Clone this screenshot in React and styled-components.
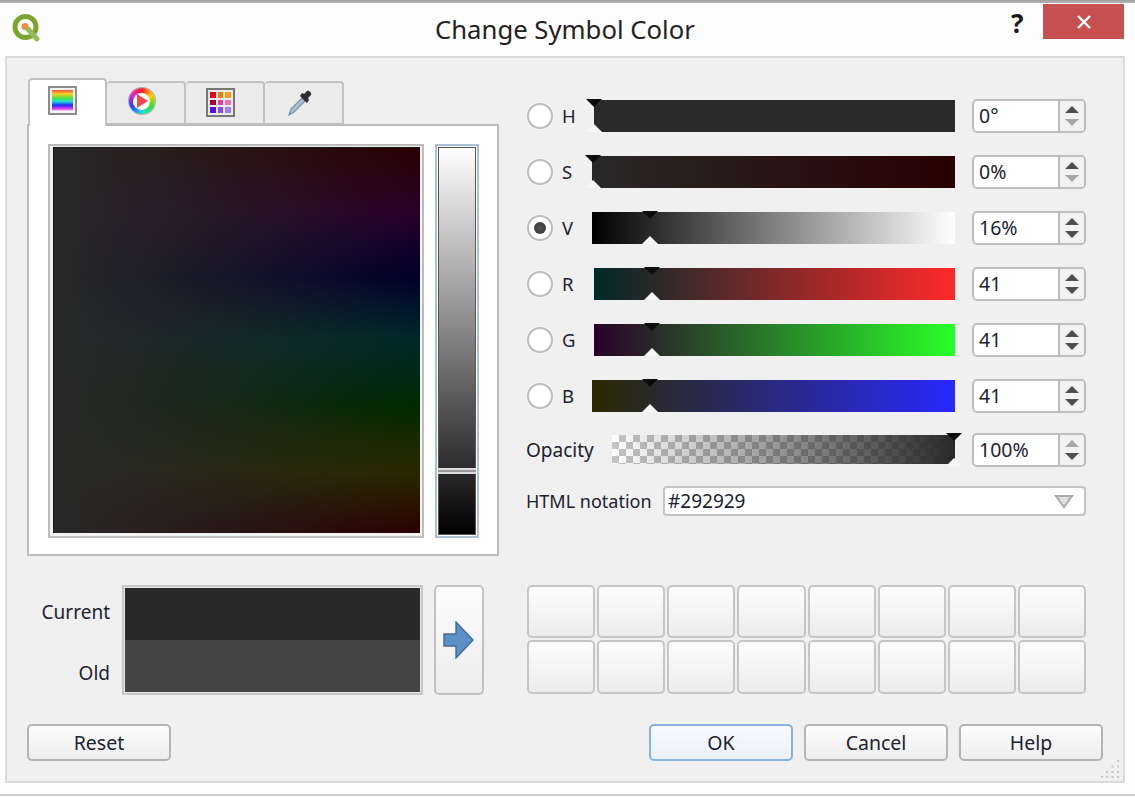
import React from "react";
import styled, { createGlobalStyle } from "styled-components";

const Global = createGlobalStyle`
  html, body { margin: 0; padding: 0; background: #fdfdfd; }
  body { font-family: "Noto Sans", "Open Sans", sans-serif; color: #1c2230; overflow: hidden; }
  * { box-sizing: border-box; }
`;

const Window = styled.div`
  width: 1135px;
  height: 797px;
  display: flex;
  flex-direction: column;
  position: relative;
  background: #fdfdfd;
`;
const TopEdge = styled.div`
  height: 3px;
  background: linear-gradient(#9c9c9c, #b8b8b8);
`;
const TitleBar = styled.div`
  height: 53px;
  display: flex;
  align-items: flex-start;
  position: relative;
  padding-left: 11px;
`;
const Logo = styled.svg`
  width: 30px;
  height: 30px;
  margin-top: 11px;
`;
const Title = styled.div`
  position: absolute;
  left: 435px;
  top: 9px;
  font-size: 25.7px;
  line-height: 36px;
  color: #222;
  white-space: nowrap;
`;
const HelpMark = styled.div`
  position: absolute;
  left: 1011px;
  top: 4px;
  font-size: 26px;
  line-height: 32px;
  font-weight: 700;
  color: #1a1a1a;
`;
const CloseBox = styled.div`
  position: absolute;
  left: 1043px;
  top: 1px;
  width: 81px;
  height: 35px;
  background: #c75050;
  display: flex;
  align-items: center;
  justify-content: center;
`;
const Panel = styled.div`
  width: 1120px;
  height: 727px;
  margin-left: 5px;
  border: 2px solid #dadada;
  background: #f0f0f0;
  padding: 20px 0 0 20px;
  display: flex;
  flex-direction: column;
  position: relative;
`;
const BottomEdge = styled.div`
  margin-top: 11px;
  height: 2px;
  background: #d0d0d0;
`;
const TopRow = styled.div`
  display: flex;
  height: 478px;
  gap: 28px;
`;
const LeftCol = styled.div`
  width: 472px;
  display: flex;
  flex-direction: column;
`;
const TabBar = styled.div`
  height: 48px;
  display: flex;
  align-items: flex-end;
  padding-left: 1px;
  margin-bottom: -2px;
  position: relative;
  z-index: 1;
`;
const Tab = styled.div`
  width: 79px;
  height: ${(p) => (p.$active ? "48px" : "43px")};
  margin-bottom: ${(p) => (p.$active ? "0" : "2px")};
  background: ${(p) => (p.$active ? "#fff" : "#ebebeb")};
  border: 2px solid #c2c2c2;
  border-bottom: ${(p) => (p.$active ? "none" : "1px solid #c2c2c2")};
  border-left-width: ${(p) => (p.$active ? "2px" : "0")};
  border-radius: 4px 4px 0 0;
  display: flex;
  justify-content: center;
  padding: ${(p) => (p.$active ? "6px 10px 0 0" : "2px 8px 0 0")};
`;
const TabPane = styled.div`
  flex: 1;
  background: #fff;
  border: 2px solid #bdbdbd;
  padding: 18px 18px 16px 19px;
  display: flex;
  gap: 11px;
`;
const ColorBox = styled.div`
  width: 376px;
  border: 2px solid #bcbcbc;
  padding: 1px 2px 3px 3px;
  background: #f2f2f2;
`;
const ColorField = styled.div`
  height: 100%;
  border-top: 1px solid #161616;
  border-left: 1px solid #161616;
  background:
    linear-gradient(to right, #292929, rgba(41, 41, 41, 0)),
    linear-gradient(to bottom, #290000 0%, #290029 16.6%, #000029 33.3%, #002929 50%, #002900 66.6%, #292900 83.3%, #290000 100%);
`;
const ValueBox = styled.div`
  width: 44px;
  border: 2px solid #a9c1d9;
  padding: 1px;
  background: #fff;
  position: relative;
`;
const ValueField = styled.div`
  height: 100%;
  background: linear-gradient(to bottom, #ffffff, #000000);
  box-shadow: inset 0 0 0 1px #555;
`;
const ValueMark = styled.div`
  position: absolute;
  left: 1px;
  right: 1px;
  bottom: 62px;
  height: 6px;
  background: #9a9a9a;
  border-top: 2px solid #dcdcdc;
  border-bottom: 2px solid #dcdcdc;
`;
const RightCol = styled.div`
  width: 559px;
  padding-top: 21px;
  display: flex;
  flex-direction: column;
`;
const SliderRows = styled.div`
  display: flex;
  flex-direction: column;
  gap: 22px;
`;
const Row = styled.div`
  display: flex;
  align-items: center;
  height: 34px;
`;
const Radio = styled.div`
  width: 26px;
  height: 26px;
  border-radius: 50%;
  border: 2px solid #bdbdbd;
  background: #fff;
  display: flex;
  align-items: center;
  justify-content: center;
  flex: none;
  &::after {
    content: "";
    display: ${(p) => (p.$on ? "block" : "none")};
    width: 12px;
    height: 12px;
    border-radius: 50%;
    background: radial-gradient(#555, #333);
  }
`;
const ChannelLabel = styled.div`
  width: 39px;
  padding: 0 0 2px 9px;
  font-size: 18.5px;
  flex: none;
`;
const Track = styled.div`
  width: 363px;
  height: 34px;
  position: relative;
  flex: none;
`;
const Bar = styled.div`
  position: absolute;
  left: ${(p) => p.$start}px;
  right: 0;
  top: 1px;
  bottom: 1px;
  background: ${(p) => p.$fill};
`;
const Grab = styled.div`
  position: absolute;
  top: 0;
  bottom: 1px;
  width: 18px;
  margin-left: -9px;
  &::before, &::after {
    content: "";
    position: absolute;
    width: 0;
    height: 0;
    border-left: 8px solid transparent;
    border-right: 8px solid transparent;
    left: 1px;
  }
  &::before { top: 0; border-top: 8px solid #0c0c0c; }
  &::after { bottom: 0; border-bottom: 8px solid #f6f6f6; }
`;
const Spin = styled.div`
  width: 114px;
  height: 34px;
  margin-left: 17px;
  border: 2px solid #bdbdbd;
  border-radius: 5px;
  background: #fff;
  display: flex;
  font-size: 19.5px;
  flex: none;
`;
const SpinValue = styled.div`
  flex: 1;
  padding-left: 5px;
  line-height: 30px;
`;
const SpinButtons = styled.div`
  width: 26px;
  background: #f2f2f2;
  border-left: 2px solid #bdbdbd;
  border-radius: 0 3px 3px 0;
  display: flex;
  flex-direction: column;
  align-items: center;
  justify-content: center;
  gap: 6px;
`;
const Arrow = styled.div`
  width: 0;
  height: 0;
  border-left: 7px solid transparent;
  border-right: 7px solid transparent;
  ${(p) => (p.$down ? "border-top" : "border-bottom")}: 7px solid ${(p) => (p.$off ? "#a8a8a8" : "#505050")};
`;
const OpacityRow = styled(Row)`
  margin-top: 20px;
`;
const OpacityLabel = styled.div`
  width: 85px;
  margin-left: -1px;
  margin-right: 1px;
  font-size: 19px;
  flex: none;
`;
const OpacityTrack = styled(Track)`
  width: 343px;
`;
const Checker = styled.div`
  position: absolute;
  left: 0;
  right: 0;
  top: 2px;
  bottom: 3px;
  background:
    linear-gradient(to right, rgba(41, 41, 41, 0), #292929),
    repeating-conic-gradient(#c4c4c4 0 25%, #ffffff 0 50%) 0 0 / 14px 14px;
`;
const HtmlRow = styled.div`
  display: flex;
  align-items: center;
  height: 30px;
  margin-top: 19px;
`;
const HtmlLabel = styled.div`
  width: 136px;
  margin-left: -1px;
  margin-right: 1px;
  font-size: 18px;
  flex: none;
  white-space: nowrap;
`;
const Combo = styled.div`
  width: 423px;
  height: 30px;
  border: 2px solid #c4c4c4;
  border-radius: 4px;
  background: #fff;
  display: flex;
  align-items: center;
  justify-content: space-between;
  padding: 0 10px 0 3px;
  font-size: 19px;
`;
const MiddleRow = styled.div`
  display: flex;
  height: 110px;
  margin-top: 29px;
`;
const SwatchLabels = styled.div`
  width: 83px;
  margin-right: 12px;
  display: flex;
  flex-direction: column;
  justify-content: space-between;
  align-items: flex-end;
  font-size: 19px;
  padding: 14px 0 9px;
`;
const Swatch = styled.div`
  width: 301px;
  border: 2px solid #c6c6c6;
  padding: 1px;
  display: flex;
  flex-direction: column;
  background: #e8e8e8;
`;
const SwatchPart = styled.div`
  flex: 1;
  background: ${(p) => p.$color};
`;
const ArrowButton = styled.div`
  width: 50px;
  margin-left: 11px;
  border: 2px solid #c2c2c2;
  border-radius: 5px;
  background: linear-gradient(#fdfdfd, #ececec);
  display: flex;
  align-items: center;
  justify-content: center;
`;
const Presets = styled.div`
  width: 559px;
  margin-left: 43px;
  display: grid;
  grid-template-columns: repeat(8, 1fr);
  grid-template-rows: 53px 54px;
  gap: 2px;
`;
const Preset = styled.div`
  border: 2px solid #c6c6c6;
  border-radius: 5px;
  background: linear-gradient(#fdfdfd, #ececec);
`;
const ButtonRow = styled.div`
  display: flex;
  margin-top: 29px;
  height: 37px;
`;
const Button = styled.div`
  width: 144px;
  height: 37px;
  border: 2px solid ${(p) => (p.$focus ? "#85b3dd" : "#b4b4b4")};
  border-radius: 5px;
  background: ${(p) => (p.$focus ? "linear-gradient(#f8fbfe, #e9f1f8)" : "linear-gradient(#fdfdfd, #ededed)")};
  display: flex;
  align-items: center;
  justify-content: center;
  padding-bottom: 1px;
  font-size: 19.5px;
  margin-left: ${(p) => p.$gap}px;
`;
const Grip = styled.svg`
  position: absolute;
  right: 3px;
  bottom: 2px;
  width: 20px;
  height: 20px;
`;
const ColorWheel = styled.div`
  width: 26px;
  height: 26px;
  margin-top: 3px;
  border-radius: 50%;
  background: conic-gradient(#ff2020, #ffd000, #30e030, #20e0e0, #2040ff, #e020e0, #ff2020);
  display: flex;
  align-items: center;
  justify-content: center;
  box-shadow: 0 0 0 1px #aaa;
`;
const WheelHole = styled.div`
  width: 17px;
  height: 17px;
  border-radius: 50%;
  background: #fff;
  display: flex;
  align-items: center;
  justify-content: center;
  padding-left: 2px;
  &::after {
    content: "";
    border-left: 11px solid #f04a4a;
    border-top: 7px solid transparent;
    border-bottom: 7px solid transparent;
  }
`;
const RainbowIcon = styled.div`
  width: 29px;
  height: 29px;
  border: 2px solid #8c8c8c;
  padding: 2px;
  background: #f4f4f4;
  &::after {
    content: "";
    display: block;
    height: 100%;
    background: linear-gradient(#e8503a, #ffd028 18%, #50e040 38%, #20e0d0 54%, #2030ff 72%, #e040e0 90%, #f4e8f4);
  }
`;
const PaletteIcon = styled.div`
  width: 29px;
  height: 29px;
  margin-top: 3px;
  border: 2px solid #777;
  padding: 2px;
  background: #ececec;
  display: grid;
  grid-template-columns: repeat(3, 1fr);
  grid-template-rows: repeat(3, 1fr);
  gap: 2px;
`;
const PaletteCell = styled.div`
  background: ${(p) => p.$color};
`;
const Dropper = styled.svg`
  width: 30px;
  height: 30px;
  margin-top: 3px;
`;

const channels = [
  { k: "H", v: "0°", start: 2, x: 2, fill: "#2a2a2a", downOff: true },
  { k: "S", v: "0%", start: 0, x: 1, fill: "linear-gradient(to right, #292929, #290000)", downOff: true },
  { k: "V", v: "16%", start: 0, x: 58, on: true, fill: "linear-gradient(to right, #000, #fff)" },
  { k: "R", v: "41", start: 2, x: 60, fill: "linear-gradient(to right, #002929, #ff2929)" },
  { k: "G", v: "41", start: 2, x: 60, fill: "linear-gradient(to right, #290029, #29ff29)" },
  { k: "B", v: "41", start: 0, x: 58, fill: "linear-gradient(to right, #292900, #2929ff)" },
];
const palette = ["#e8001c", "#f08000", "#f0a010", "#a00030", "#e04090", "#f070b0", "#5010f0", "#8050f0", "#a080f0"];
const presets = Array.from({ length: 16 }, (_, i) => i);
const gripDots = [[17, 1], [17, 6.5], [11.5, 6.5], [17, 12], [11.5, 12], [6, 12], [17, 17], [11.5, 17], [6, 17], [1, 17]];

function Stepper({ value, upOff, downOff }) {
  return (
    <Spin>
      <SpinValue>{value}</SpinValue>
      <SpinButtons>
        <Arrow $off={upOff} />
        <Arrow $down $off={downOff} />
      </SpinButtons>
    </Spin>
  );
}

export default function App() {
  return (
    <Window>
      <Global />
      <TopEdge />
      <TitleBar>
        <Logo viewBox="0 0 30 30">
          <circle cx="14.5" cy="13" r="10.5" fill="none" stroke="#7ba52c" strokeWidth="5" />
          <circle cx="14" cy="12.5" r="3.5" fill="#f08a3a" />
          <path d="M17 15l9 10" stroke="#93bd58" strokeWidth="5" strokeLinecap="round" />
        </Logo>
        <Title>Change Symbol Color</Title>
        <HelpMark>?</HelpMark>
        <CloseBox>
          <svg width="16" height="16" viewBox="0 0 16 16">
            <path d="M2 2l12 12M14 2L2 14" stroke="#fff" strokeWidth="2.4" />
          </svg>
        </CloseBox>
      </TitleBar>
      <Panel>
        <TopRow>
          <LeftCol>
            <TabBar>
              <Tab $active><RainbowIcon /></Tab>
              <Tab><ColorWheel><WheelHole /></ColorWheel></Tab>
              <Tab>
                <PaletteIcon>
                  {palette.map((c) => <PaletteCell key={c} $color={c} />)}
                </PaletteIcon>
              </Tab>
              <Tab>
                <Dropper viewBox="0 0 30 30">
                  <path d="M4 27l2-6L17 10l3 3L9 24z" fill="#a8c4dc" stroke="#6f8ba3" strokeWidth="1.2" />
                  <path d="M15 8l7 7 2-3-1-2 3-3c1-2-2-5-4-4l-3 3-2-1z" fill="#2e2e2e" />
                </Dropper>
              </Tab>
            </TabBar>
            <TabPane>
              <ColorBox><ColorField /></ColorBox>
              <ValueBox>
                <ValueField />
                <ValueMark />
              </ValueBox>
            </TabPane>
          </LeftCol>
          <RightCol>
            <SliderRows>
              {channels.map((c) => (
                <Row key={c.k}>
                  <Radio $on={c.on} />
                  <ChannelLabel>{c.k}</ChannelLabel>
                  <Track>
                    <Bar $start={c.start} $fill={c.fill} />
                    <Grab style={{ left: c.x }} />
                  </Track>
                  <Stepper value={c.v} downOff={c.downOff} />
                </Row>
              ))}
            </SliderRows>
            <OpacityRow>
              <OpacityLabel>Opacity</OpacityLabel>
              <OpacityTrack>
                <Checker />
                <Grab style={{ left: 342 }} />
              </OpacityTrack>
              <Stepper value="100%" upOff />
            </OpacityRow>
            <HtmlRow>
              <HtmlLabel>HTML notation</HtmlLabel>
              <Combo>
                #292929
                <svg width="20" height="15" viewBox="0 0 20 15">
                  <path d="M2 2h16l-8 11z" fill="#e2e2e2" stroke="#a9a9a9" strokeWidth="2" />
                </svg>
              </Combo>
            </HtmlRow>
          </RightCol>
        </TopRow>
        <MiddleRow>
          <SwatchLabels>
            <div>Current</div>
            <div>Old</div>
          </SwatchLabels>
          <Swatch>
            <SwatchPart $color="#292929" />
            <SwatchPart $color="#444444" />
          </Swatch>
          <ArrowButton>
            <svg width="32" height="38" viewBox="0 0 32 38">
              <path d="M1 13h12V1l17 18-17 18V25H1z" fill="#5c90c8" stroke="#3f6c9c" strokeWidth="1.4" />
            </svg>
          </ArrowButton>
          <Presets>
            {presets.map((i) => <Preset key={i} />)}
          </Presets>
        </MiddleRow>
        <ButtonRow>
          <Button>Reset</Button>
          <Button $gap={478} $focus>OK</Button>
          <Button $gap={11}>Cancel</Button>
          <Button $gap={11}>Help</Button>
        </ButtonRow>
        <Grip viewBox="0 0 20 20">
          {gripDots.map(([x, y]) => (
            <rect key={`${x}-${y}`} x={x} y={y} width="2" height="2" fill="#c8c8c8" />
          ))}
        </Grip>
      </Panel>
      <BottomEdge />
    </Window>
  );
}
